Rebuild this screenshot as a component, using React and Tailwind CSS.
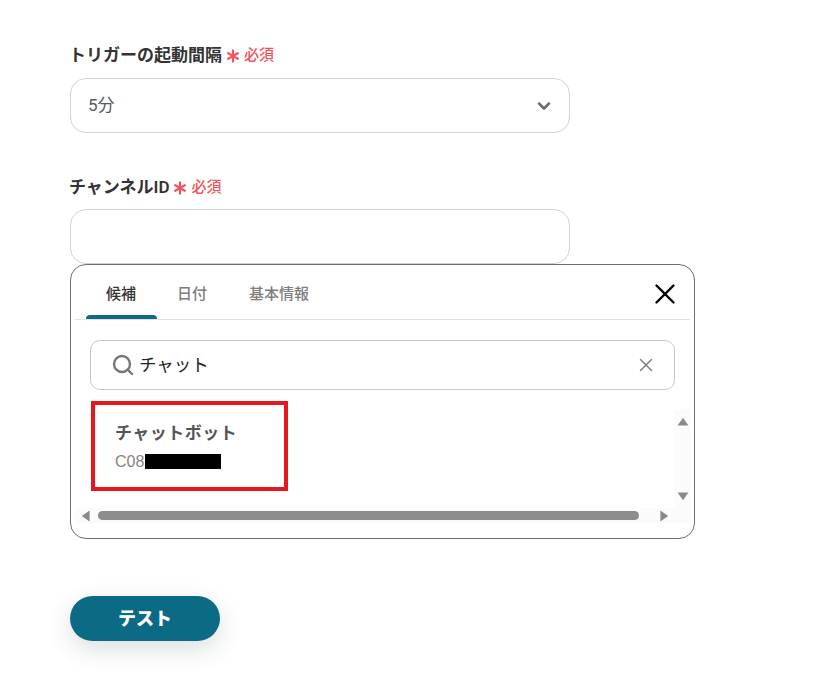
import { ChevronDown, Search, X } from 'lucide-react'

const fontStack = 'font-["Roboto","Noto_Sans_CJK_JP",sans-serif]'

const FieldLabel = ({ text, className }) => (
	<div className={`-ml-px flex h-[24px] items-center text-[17px] font-semibold leading-[24px] text-[#333333] ${className}`}>
		<span>{text}</span>
		<span className="ml-[4px] flex items-center text-[15px] font-medium text-[#f2545b]">
			<svg className="mr-[4px] mt-[2px] h-[14px] w-[14px]" viewBox="0 0 13 13" fill="none" stroke="currentColor" strokeWidth="2">
				<path d="M6.5 .5v12M1.3 3.5l10.4 6M11.7 3.5l-10.4 6" />
			</svg>
			必須
		</span>
	</div>
)

const ScrollArrow = ({ d, className }) => (
	<svg className={className} viewBox="0 0 10 10" fill="#8a8a8a">
		<path d={d} />
	</svg>
)

export default function App() {
	return (
		<div className={`h-[676px] w-[817px] overflow-hidden bg-white pl-[70px] pt-[43px] ${fontStack}`}>
			<FieldLabel text="トリガーの起動間隔" />
			<div className="mt-[11px] flex h-[55px] w-[500px] items-center justify-between rounded-[16px] border border-[#cfd4dc] pl-[17px] pr-[15px] text-[17px] text-[#555b61]">
				<span className="pt-px">5分</span>
				<ChevronDown className="h-[20px] w-[20px] text-[#6b6b6b]" strokeWidth={3} />
			</div>

			<FieldLabel text="チャンネルID" className="mt-[42px]" />
			<div className="mt-[10px] h-[55px] w-[500px] rounded-[16px] border border-[#cfd4dc]" />

			<div className="flex h-[275px] w-[625px] flex-col rounded-[16px] border border-[#6f6f6f] bg-white px-[4px]">
				<div className="flex h-[55px] shrink-0 items-end gap-px border-b border-[#e2e2e2] pl-[11px]">
					<div className="flex h-[54px] w-[71px] flex-col">
						<span className="flex-1 pl-[20px] pt-[17px] text-[15px] font-medium leading-[24px] text-[#333333]">候補</span>
						<span className="h-[4px] rounded-t-[4px] bg-[#0b6a84]" />
					</div>
					<span className="-ml-px h-[54px] w-[71px] pl-[20px] pt-[17px] text-[15px] font-medium leading-[24px] text-[#7d7d7d]">日付</span>
					<span className="h-[54px] pl-[20px] pt-[17px] text-[15px] font-medium leading-[24px] text-[#7d7d7d]">基本情報</span>
					<X className="mb-[8px] ml-auto mr-[8px] h-[34px] w-[34px] self-end text-black" strokeWidth={1.7} />
				</div>

				<div className="mx-[15px] mt-[20px] flex h-[50px] shrink-0 items-center rounded-[10px] border border-[#c9c9c9] pl-[20px] pr-[17px]">
					<Search className="h-[24px] w-[24px] text-[#777777]" strokeWidth={2.4} />
					<span className="ml-[4px] text-[17.5px] text-[#222222]">チャット</span>
					<X className="ml-auto h-[22px] w-[22px] text-[#808080]" strokeWidth={1.6} />
				</div>

				<div className="mt-[11px] flex flex-1 flex-col">
					<div className="flex flex-1">
						<div className="flex-1 pl-[16px]">
							<div className="h-[90px] w-[197px] border-4 border-[#e8161d] pl-[20px] pt-[16px]">
								<p className="text-[17px] font-semibold leading-[24px] tracking-[0.5px] text-[#555555]">チャットボット</p>
								<div className="mt-[9px] flex h-[15px] items-center text-[16px] text-[#858585]">
									<span className="font-['Liberation_Sans',sans-serif]">C08</span>
									<span className="ml-px h-[15px] w-[76px] bg-black" />
								</div>
							</div>
						</div>
						<div className="mt-[9px] flex h-[98px] w-[15px] flex-col items-center justify-between bg-[#fbfbfb] py-[6px]">
							<ScrollArrow className="h-[12px] w-[12px]" d="M5 1.5 9.5 8H.5z" />
							<ScrollArrow className="h-[12px] w-[12px]" d="M5 8.5.5 2h9z" />
						</div>
					</div>
					<div className="mb-[15px] flex h-[15px] items-center bg-[#fbfbfb] pl-[5px] pr-[20px]">
						<ScrollArrow className="h-[12px] w-[12px] shrink-0" d="M1.5 5 8 .5v9z" />
						<span className="ml-[6px] h-[9px] flex-1 rounded-full bg-[#8c8c8c]" />
						<ScrollArrow className="ml-[19px] h-[12px] w-[12px] shrink-0" d="M8.5 5 2 9.5v-9z" />
					</div>
				</div>
			</div>

			<button className="mt-[57px] flex h-[45px] w-[150px] items-center justify-center rounded-full bg-[#0b6a84] text-[18px] font-black text-white shadow-[0_8px_24px_rgba(30,50,70,0.16)]">
				テスト
			</button>
		</div>
	)
}
